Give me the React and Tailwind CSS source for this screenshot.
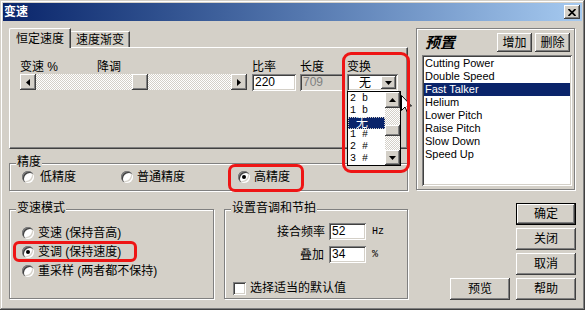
import React from "react";

const RAISED =
  "shadow-[inset_-1px_-1px_0_#404040,inset_1px_1px_0_#ffffff,inset_-2px_-2px_0_#808080,inset_2px_2px_0_#d4d0c8]";
const SUNKEN =
  "shadow-[inset_1px_1px_0_#808080,inset_-1px_-1px_0_#ffffff,inset_2px_2px_0_#404040,inset_-2px_-2px_0_#d4d0c8]";
const ETCHED = "border border-[#808080] shadow-[inset_1px_1px_0_#ffffff,1px_1px_0_#ffffff]";
const DITHER =
  "bg-[image:repeating-conic-gradient(#ffffff_0_25%,#d4d0c8_0_50%)] bg-[length:2px_2px]";

function Btn3D({ className = "", children }) {
  return (
    <div className={`flex shrink-0 items-center justify-center bg-[#d4d0c8] ${RAISED} ${className}`}>
      {children}
    </div>
  );
}

function ArrowGlyph({ dir }) {
  if (dir === "up")
    return (
      <svg width="7" height="4">
        <polygon points="0,4 7,4 3.5,0" fill="#000" />
      </svg>
    );
  if (dir === "down")
    return (
      <svg width="7" height="4">
        <polygon points="0,0 7,0 3.5,4" fill="#000" />
      </svg>
    );
  if (dir === "left")
    return (
      <svg width="4" height="7">
        <polygon points="4,0 4,7 0,3.5" fill="#000" />
      </svg>
    );
  return (
    <svg width="4" height="7">
      <polygon points="0,0 0,7 4,3.5" fill="#000" />
    </svg>
  );
}

function Radio({ checked }) {
  return (
    <span className="flex h-3 w-3 shrink-0 items-center justify-center rounded-full bg-white shadow-[inset_1px_1px_0_#808080,inset_2px_2px_0_#404040,inset_-1px_-1px_0_#ffffff,inset_-2px_-2px_0_#d4d0c8]">
      {checked && <span className="h-1 w-1 rounded-full bg-black" />}
    </span>
  );
}

function Group({ title, className = "", children }) {
  return (
    <div className={`${ETCHED} ${className}`}>
      <div className="-mt-[9px] ml-[6px] w-fit bg-[#d4d0c8] px-[1px] leading-[14px]">{title}</div>
      {children}
    </div>
  );
}

const presets = [
  "Cutting Power",
  "Double Speed",
  "Fast Talker",
  "Helium",
  "Lower Pitch",
  "Raise Pitch",
  "Slow Down",
  "Speed Up",
];

const keys = ["2 b", "1 b", "无", "1 #", "2 #", "3 #"];

export default function App() {
  return (
    <div className="relative flex h-[310px] w-[585px] flex-col overflow-hidden bg-[#d4d0c8] p-[3px] font-['Liberation_Sans','Noto_Sans_CJK_SC',sans-serif] text-[12px] leading-[14px] text-black shadow-[inset_-1px_-1px_0_#404040,inset_1px_1px_0_#d4d0c8,inset_-2px_-2px_0_#808080,inset_2px_2px_0_#ffffff]">
      {/* title bar */}
      <div className="flex h-[18px] shrink-0 items-center bg-linear-to-r from-[#0a246a] to-[#a6caf0] pl-[1px] pr-[2px]">
        <span className="font-bold text-white">变速</span>
        <Btn3D className="ml-auto h-[14px] w-[16px]">
          <svg width="8" height="7" viewBox="0 0 8 7">
            <path d="M0.5 0L7.5 7M7.5 0L0.5 7" stroke="#000" strokeWidth="1.7" />
          </svg>
        </Btn3D>
      </div>

      <div className="flex flex-col pl-[6px] pt-[7px]">
        {/* top row */}
        <div className="flex h-[163px]">
          <div className="flex w-[399px] flex-col">
            {/* tabs */}
            <div className="flex h-[19px] items-end">
              <div className="relative z-10 -mb-px h-[20px] rounded-tl-[2px] border-l border-t border-r border-white border-r-[#404040] bg-[#d4d0c8] px-[6px] pt-[3px] shadow-[inset_-1px_0_0_#808080]">
                恒定速度
              </div>
              <div className="h-[16px] border-t border-r border-white border-r-[#404040] px-[5px] pt-[1px] shadow-[inset_-1px_0_0_#808080]">
                速度渐变
              </div>
            </div>

            {/* tab panel */}
            <div className="flex h-[102px] items-start border border-white border-b-[#404040] border-r-[#404040] pl-[10px] pt-[12px] shadow-[inset_-1px_-1px_0_#808080]">
              <div className="flex w-[227px] flex-col">
                <div className="flex h-[14px]">
                  <span className="w-[77px]">变速 %</span>
                  <span>降调</span>
                </div>
                <div className="flex h-[16px]">
                  <Btn3D className="h-4 w-4">
                    <ArrowGlyph dir="left" />
                  </Btn3D>
                  <div className={`w-[96px] ${DITHER}`} />
                  <Btn3D className="h-4 w-4" />
                  <div className={`flex-1 ${DITHER}`} />
                  <Btn3D className="h-4 w-4">
                    <ArrowGlyph dir="right" />
                  </Btn3D>
                </div>
              </div>

              <div className="ml-[5px] flex w-[44px] flex-col">
                <span className="h-[14px]">比率</span>
                <div className={`h-[17px] bg-white pl-[3px] leading-[17px] ${SUNKEN}`}>220</div>
              </div>

              <div className="ml-[4px] flex w-[44px] flex-col">
                <span className="h-[14px]">长度</span>
                <div className={`h-[17px] bg-[#d4d0c8] pl-[3px] leading-[17px] text-[#808080] ${SUNKEN}`}>709</div>
              </div>

              <div className="relative ml-[3px] flex w-[51px] flex-col">
                <span className="h-[14px]">变换</span>
                <div className={`flex h-[17px] items-center bg-white p-[2px] ${SUNKEN}`}>
                  <span className="flex-1 text-center">无</span>
                  <Btn3D className="h-[13px] w-[15px]">
                    <ArrowGlyph dir="down" />
                  </Btn3D>
                </div>
                {/* open drop-down list */}
                <div className="absolute left-0 top-[31px] z-20 flex h-[75px] w-[54px] border border-black bg-white">
                  <div className="flex flex-1 flex-col pt-[1px]">
                    {keys.map((k) =>
                      k === "无" ? (
                        <div
                          key={k}
                          className="h-[12px] bg-[#0a246a] pl-[8px] text-[12px] leading-[12px] text-white outline-1 outline-dotted outline-[#d4d0c8] -outline-offset-1"
                        >
                          {k}
                        </div>
                      ) : (
                        <div
                          key={k}
                          className="h-[12px] whitespace-pre pl-[2px] font-['Liberation_Mono',monospace] text-[10px] leading-[12px]"
                        >
                          {k}
                        </div>
                      )
                    )}
                  </div>
                  <div className="flex w-[15px] flex-col">
                    <Btn3D className="h-[16px] w-[15px]">
                      <ArrowGlyph dir="up" />
                    </Btn3D>
                    <div className={`h-[17px] ${DITHER}`} />
                    <Btn3D className="h-[11px] w-[15px]" />
                    <div className={`flex-1 ${DITHER}`} />
                    <Btn3D className="h-[15px] w-[15px]">
                      <ArrowGlyph dir="down" />
                    </Btn3D>
                  </div>
                </div>
              </div>
            </div>

            {/* precision */}
            <Group title="精度" className="mt-[14px] h-[28px]">
              <div className="mt-[1px] flex h-[14px] items-center pl-[12px]">
                <Radio />
                <span className="ml-[6px]">低精度</span>
                <span className="ml-[45px]" />
                <Radio />
                <span className="ml-[4px]">普通精度</span>
                <span className="ml-[53px]" />
                <Radio checked />
                <span className="ml-[4px]">高精度</span>
              </div>
            </Group>
          </div>

          {/* presets */}
          <div className={`ml-[8px] flex h-[162px] w-[159px] flex-col pl-[5px] pr-[2px] ${ETCHED}`}>
            <div className="mt-[4px] flex h-[19px] items-center">
              <span className="ml-[3px] text-[15px] font-bold italic leading-[19px]">预置</span>
              <Btn3D className="ml-auto h-[19px] w-[35px]">增加</Btn3D>
              <Btn3D className="ml-[3px] mr-[2px] h-[19px] w-[35px]">删除</Btn3D>
            </div>
            <div className={`mt-[3px] h-[131px] bg-white p-[2px] ${SUNKEN}`}>
              {presets.map((p) => (
                <div
                  key={p}
                  className={`h-[13px] pl-[1px] text-[11px] leading-[13px] ${
                    p === "Fast Talker" ? "bg-[#0a246a] text-white" : ""
                  }`}
                >
                  {p}
                </div>
              ))}
            </div>
          </div>
        </div>

        {/* bottom row */}
        <div className="mt-[11px] flex">
          <Group title="变速模式" className="mt-[7px] h-[90px] w-[205px]">
            <div className="mt-[11px] flex flex-col gap-[5px] pl-[12px]">
              <div className="flex h-[14px] items-center">
                <Radio />
                <span className="ml-[4px]">变速 (保持音高)</span>
              </div>
              <div className="flex h-[14px] items-center">
                <Radio checked />
                <span className="ml-[4px]">变调 (保持速度)</span>
              </div>
              <div className="flex h-[14px] items-center">
                <Radio />
                <span className="ml-[4px]">重采样 (两者都不保持)</span>
              </div>
            </div>
          </Group>

          <Group title="设置音调和节拍" className="ml-[10px] mt-[7px] h-[90px] w-[184px]">
            <div className="mt-[8px] flex h-[17px] items-center">
              <span className="w-[104px] pr-[4px] text-right">接合频率</span>
              <div className={`h-[17px] w-[37px] bg-white pl-[3px] leading-[17px] ${SUNKEN}`}>52</div>
              <span className="ml-[6px] font-['Liberation_Mono',monospace] text-[10px]">Hz</span>
            </div>
            <div className="mt-[6px] flex h-[17px] items-center">
              <span className="w-[104px] pr-[5px] text-right">叠加</span>
              <div className={`h-[17px] w-[37px] bg-white pl-[3px] leading-[17px] ${SUNKEN}`}>34</div>
              <span className="ml-[6px] font-['Liberation_Mono',monospace] text-[10px]">%</span>
            </div>
            <div className="mt-[18px] flex h-[14px] items-center pl-[8px]">
              <span className={`h-[13px] w-[13px] bg-white ${SUNKEN}`} />
              <span className="ml-[4px]">选择适当的默认值</span>
            </div>
          </Group>

          <Btn3D className="ml-[42px] h-[22px] w-[60px] self-end">预览</Btn3D>

          <div className="ml-[6px] mt-[1px] flex flex-col gap-[3px]">
            <div className="h-[22px] w-[60px] border border-black">
              <Btn3D className="h-full w-full">确定</Btn3D>
            </div>
            <Btn3D className="h-[22px] w-[60px]">关闭</Btn3D>
            <Btn3D className="h-[22px] w-[60px]">取消</Btn3D>
            <Btn3D className="h-[22px] w-[60px]">帮助</Btn3D>
          </div>
        </div>
      </div>

      {/* mouse pointer over the list */}
      <svg className="pointer-events-none absolute left-[401px] top-[95px] z-30" width="12" height="19" viewBox="0 0 12 19">
        <path d="M0.5 0.5L0.5 15.5L4 12L6.5 17.5L8.5 16.5L6 11L10.5 11Z" fill="#fff" stroke="#000" strokeWidth="1" />
      </svg>

      {/* red annotation marks */}
      <div className="pointer-events-none absolute left-[342px] top-[52px] z-40 h-[121px] w-[68px] rounded-[9px] border-[3px] border-[#ee1515]" />
      <div className="pointer-events-none absolute left-[228px] top-[164px] z-40 h-[28px] w-[76px] rounded-[7px] border-[3px] border-[#ee1515]" />
      <div className="pointer-events-none absolute left-[13px] top-[241px] z-40 h-[21px] w-[124px] rounded-[6px] border-[3px] border-[#ee1515]" />
    </div>
  );
}
